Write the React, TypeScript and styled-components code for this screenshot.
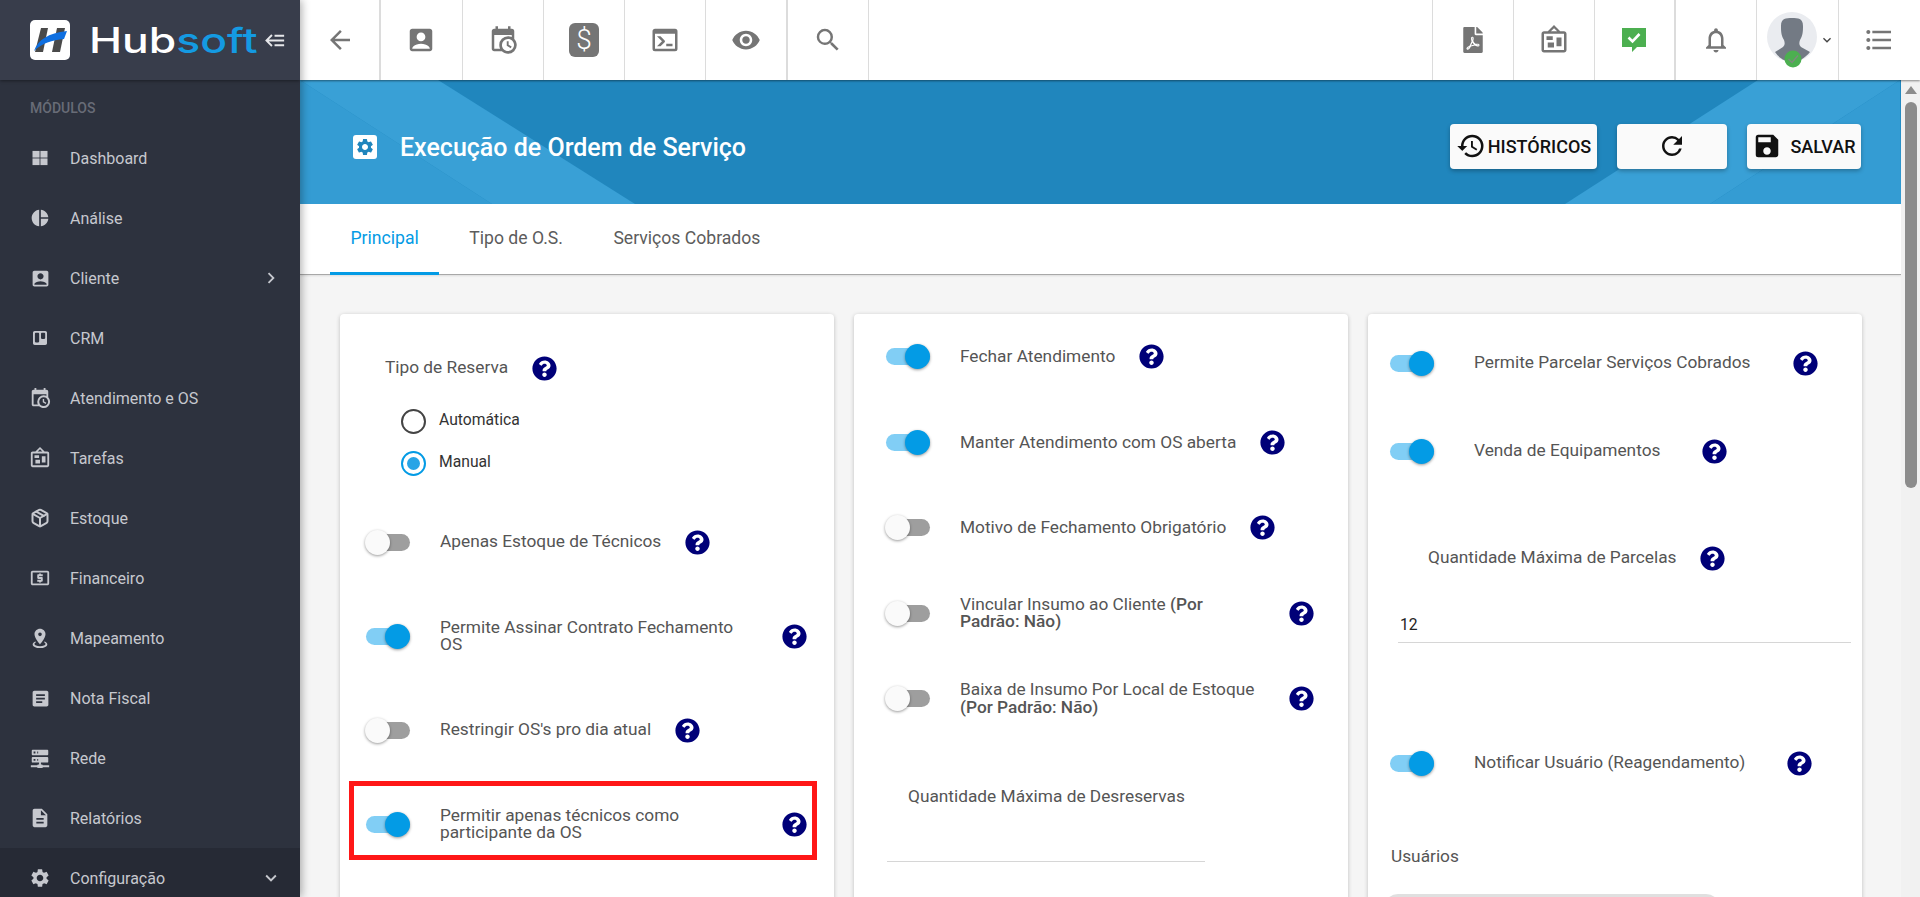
import * as React from 'react';
import styled, { createGlobalStyle } from 'styled-components';
import { FaFilePdf, FaQuestionCircle, FaTrello } from 'react-icons/fa';
import {
    MdAccountBox, MdArrowBack, MdArticle, MdChevronRight, MdDescription, MdFormatListBulleted,
    MdHistory, MdKeyboardArrowDown, MdLocalAtm, MdNotificationsNone, MdPieChart, MdRefresh,
    MdSave, MdSearch, MdSettings, MdVisibility,
} from 'react-icons/md';
import { Package } from 'lucide-react';

const GlobalStyle = createGlobalStyle`
    html, body { margin: 0; padding: 0; height: 100%; overflow: hidden; }
    body { font-family: Roboto, "Liberation Sans", sans-serif; background: #f5f5f5; }
    * { box-sizing: border-box; }
`;

const CALENDAR_CLOCK = 'M15,13H16.5V15.82L18.94,17.23L18.19,18.53L15,16.69V13M19,8H5V19H9.67C9.24,18.09 9,17.07 9,16A7,7 0 0,1 16,9C17.07,9 18.09,9.24 19,9.67V8M5,21C3.89,21 3,20.1 3,19V5C3,3.89 3.89,3 5,3H6V1H8V3H16V1H18V3H19A2,2 0 0,1 21,5V11.1C22.24,12.36 23,14.09 23,16A7,7 0 0,1 16,23C14.09,23 12.36,22.24 11.1,21H5M16,11.15A4.85,4.85 0 0,0 11.15,16C11.15,18.68 13.32,20.85 16,20.85A4.85,4.85 0 0,0 20.85,16C20.85,13.32 18.68,11.15 16,11.15Z';
const BULLETIN = 'M12.04 2.5L9.53 5H14.53L12.04 2.5M4 7V20H20V7H4M12 0L17 5V5L20 5C21.11 5 22 5.89 22 7V20C22 21.11 21.11 22 20 22H4C2.89 22 2 21.11 2 20V7C2 5.89 2.89 5 4 5H7V5L12 0M7 18V14H12V18H7M14 17V10H18V17H14M6 12V9H11V12H6Z';
const MAP_MARKER = 'M12,2C15.31,2 18,4.66 18,7.95C18,12.41 12,19 12,19C12,19 6,12.41 6,7.95C6,4.66 8.69,2 12,2M12,6A2,2 0 0,0 10,8A2,2 0 0,0 12,10A2,2 0 0,0 14,8A2,2 0 0,0 12,6M20,19C20,21.21 16.42,23 12,23C7.58,23 4,21.21 4,19C4,17.71 5.22,16.56 7.11,15.83L7.75,16.74C6.67,17.19 6,17.81 6,18.5C6,19.88 8.69,21 12,21C15.31,21 18,19.88 18,18.5C18,17.81 17.33,17.19 16.25,16.74L16.89,15.83C18.78,16.56 20,17.71 20,19Z';
const SERVER = 'M13,19H14A1,1 0 0,1 15,20H22V22H15A1,1 0 0,1 14,23H10A1,1 0 0,1 9,22H2V20H9A1,1 0 0,1 10,19H11V17H4A1,1 0 0,1 3,16V12A1,1 0 0,1 4,11H20A1,1 0 0,1 21,12V16A1,1 0 0,1 20,17H13V19M4,3H20A1,1 0 0,1 21,4V8A1,1 0 0,1 20,9H4A1,1 0 0,1 3,8V4A1,1 0 0,1 4,3M9,7H10V5H9V7M9,15H10V13H9V15M5,5V7H7V5H5M5,13V15H7V13H5Z';
const CONSOLE = 'M20,19V7H4V19H20M20,3A2,2 0 0,1 22,5V19A2,2 0 0,1 20,21H4A2,2 0 0,1 2,19V5C2,3.89 2.9,3 4,3H20M13,17V15H18V17H13M9.58,13L5.57,9H8.4L11.7,12.3C12.09,12.69 12.09,13.33 11.7,13.72L8.42,17H5.59L9.58,13Z';
const BACKBURGER = 'M5,13L9,17L7.6,18.42L1.18,12L7.6,5.58L9,7L5,11H21V13H5M21,6V8H11V6H21M21,16V18H11V16H21Z';

const Glyph = ({ d, size = 24 }: { d: string; size?: number }) => (
    <svg width={size} height={size} viewBox="0 0 24 24" fill="currentColor"><path d={d} /></svg>
);

const PanesIcon = () => (
    <svg width={20} height={20} viewBox="0 0 24 24" fill="currentColor">
        <rect x="3" y="3.5" width="8.5" height="8" /><rect x="12.5" y="3.5" width="8.5" height="8" />
        <rect x="3" y="12.5" width="8.5" height="8" /><rect x="12.5" y="12.5" width="8.5" height="8" />
    </svg>
);

const Page = styled.div`
    display: flex;
    width: 1920px;
    height: 897px;
    overflow: hidden;
`;

/* sidebar */
const Sidebar = styled.aside`
    width: 300px;
    flex: none;
    height: 100%;
    display: flex;
    flex-direction: column;
    background: #2d323e;
    box-shadow: 2px 0 8px rgba(0, 0, 0, .3);
    position: relative;
    z-index: 3;
    overflow: hidden;
`;
const Brand = styled.div`
    height: 80px;
    flex: none;
    display: flex;
    align-items: center;
    padding-left: 30px;
    background: #383d4b;
    box-shadow: 0 1px 3px rgba(0, 0, 0, .4);
`;
const LogoMark = styled.svg`
    flex: none;
    margin-right: 19px;
`;
const Wordmark = styled.div`
    font-family: Inter, sans-serif;
    font-weight: 500;
    font-size: 35px;
    line-height: 40px;
    color: #fff;
    width: 126px;
    transform: scaleX(1.27);
    transform-origin: left center;
    white-space: nowrap;
    span { color: #149ae2; }
`;
const Collapse = styled.div`
    color: #e6e7ea;
    margin-left: 49px;
    display: flex;
`;
const SectionLabel = styled.div`
    height: 48px;
    padding: 18px 0 0 30px;
    font-size: 14px;
    line-height: 20px;
    font-weight: 500;
    color: #686c77;
    flex: none;
`;
const NavItem = styled.div<{ $active?: boolean }>`
    height: 60px;
    flex: none;
    display: flex;
    align-items: center;
    padding-left: 29px;
    color: #c6c8ce;
    font-size: 16px;
    background: ${p => (p.$active ? '#262a35' : 'transparent')};
`;
const NavIcon = styled.span`
    width: 22px;
    height: 22px;
    margin-right: 19px;
    display: flex;
    align-items: center;
    justify-content: center;
`;
const NavArrow = styled.span`
    margin-left: auto;
    margin-right: 18px;
    display: flex;
`;

/* top bar */
const Main = styled.div`
    flex: 1;
    min-width: 0;
    display: flex;
    flex-direction: column;
`;
const TopBar = styled.header`
    height: 80px;
    flex: none;
    display: flex;
    justify-content: space-between;
    background: #fff;
    box-shadow: 0 1px 2px rgba(0, 0, 0, .45);
    position: relative;
    z-index: 2;
`;
const ToolGroup = styled.div`
    display: flex;
`;
const Tool = styled.div<{ $thick?: boolean; $first?: boolean; $bare?: boolean }>`
    width: 81.3px;
    display: flex;
    align-items: center;
    justify-content: center;
    color: #757575;
    border-right: ${p => (p.$bare ? 0 : p.$thick ? '2px' : '1px')} solid #dcdcdc;
    border-left: ${p => (p.$first ? '1px solid #dcdcdc' : '0')};
`;
const DollarBox = styled.div`
    width: 30px;
    height: 34px;
    border-radius: 6px;
    background: #757575;
    color: #fff;
    font-family: Roboto, sans-serif;
    font-weight: 300;
    font-size: 28px;
    line-height: 34px;
    text-align: center;
`;
const AvatarWrap = styled.div`
    display: flex;
    align-items: center;
    color: #444;
    gap: 2px;
    margin-left: 7px;
`;

/* body */
const Body = styled.div`
    flex: 1;
    min-height: 0;
    display: flex;
`;
const Scroller = styled.div`
    flex: 1;
    min-width: 0;
    display: flex;
    flex-direction: column;
    overflow: hidden;
`;
const FakeScrollbar = styled.div`
    width: 19px;
    flex: none;
    background: #f1f1f1;
    padding: 4px 4px 0;
`;
const ScrollUp = styled.div`
    width: 0;
    height: 0;
    margin: 2px 0 0 0;
    border-left: 6px solid transparent;
    border-right: 6px solid transparent;
    border-bottom: 8px solid #8c8c8c;
`;
const ScrollThumb = styled.div`
    width: 12px;
    height: 386px;
    margin-top: 8px;
    background: #8c8c8c;
    border-radius: 6px;
`;
const Hero = styled.div`
    height: 124px;
    flex: none;
    position: relative;
    display: flex;
    align-items: center;
    padding: 10px 40px 0 53px;
    background: #2086bd;
`;
const HeroArt = styled.svg`
    position: absolute;
    inset: 0;
    width: 100%;
    height: 100%;
`;
const TitleIcon = styled.div`
    position: relative;
    width: 24px;
    height: 24px;
    border-radius: 3px;
    background: #fff;
    color: #2086bd;
    display: flex;
    align-items: center;
    justify-content: center;
    margin-right: 23px;
`;
const Title = styled.h1`
    position: relative;
    margin: 0;
    color: #fff;
    font-size: 25px;
    font-weight: 500;
`;
const HeroActions = styled.div`
    position: relative;
    margin-left: auto;
    display: flex;
    gap: 20px;
    margin-top: -2px;
`;
const HeroButton = styled.button<{ $w: number }>`
    width: ${p => p.$w}px;
    height: 45px;
    border: 0;
    padding: 0 4px;
    border-radius: 4px;
    background: #fafafa;
    color: #111;
    font-family: Roboto, sans-serif;
    font-size: 18px;
    font-weight: 500;
    display: flex;
    align-items: center;
    justify-content: center;
    gap: 2px;
    box-shadow: 0 2px 4px rgba(0, 0, 0, .28);
`;
const Tabs = styled.nav`
    height: 71px;
    flex: none;
    display: flex;
    padding-left: 30px;
    background: #fff;
    border-bottom: 1px solid #a8a8a8;
    box-shadow: 0 1px 2px rgba(0, 0, 0, .1);
`;
const Tab = styled.div<{ $active?: boolean }>`
    padding: 0 20.5px;
    margin-right: 9.5px;
    display: flex;
    align-items: center;
    height: 71px;
    font-size: 17.6px;
    color: ${p => (p.$active ? '#039be5' : '#5c5c5c')};
    border-bottom: 3px solid ${p => (p.$active ? '#039be5' : 'transparent')};
`;
const Content = styled.div`
    flex: 1;
    min-height: 0;
    padding: 39px 39px 0 40px;
    display: grid;
    grid-template-columns: repeat(3, 494px);
    gap: 20px;
    overflow: hidden;
`;
const Card = styled.section<{ $pad?: number }>`
    height: 800px;
    background: #fff;
    border-radius: 4px;
    padding-top: ${p => p.$pad ?? 0}px;
    box-shadow: 0 1px 4px rgba(0, 0, 0, .22);
`;

/* form parts */
const Row = styled.div<{ $h: number; $left: number; $gap?: number; $top?: number }>`
    position: relative;
    height: ${p => p.$h}px;
    margin-top: ${p => p.$top ?? 0}px;
    padding-left: ${p => p.$left}px;
    display: flex;
    align-items: center;
    & > span:first-child { margin-right: ${p => p.$gap ?? 30}px; }
`;
const Track = styled.span<{ $on?: boolean }>`
    position: relative;
    width: 44px;
    height: 17px;
    flex: none;
    border-radius: 9px;
    background: ${p => (p.$on ? '#81cef5' : '#9e9e9e')};
    &::after {
        content: '';
        position: absolute;
        top: -4px;
        left: ${p => (p.$on ? '19px' : '-1px')};
        width: 25px;
        height: 25px;
        border-radius: 50%;
        background: ${p => (p.$on ? '#039be5' : '#fafafa')};
        box-shadow: 0 1px 3px rgba(0, 0, 0, .4);
    }
`;
const Label = styled.div<{ $w: number; $wrap?: number }>`
    width: ${p => p.$w}px;
    padding-right: ${p => (p.$wrap ? p.$w - p.$wrap : 0)}px;
    flex: none;
    font-size: 17.3px;
    line-height: 17.5px;
    color: #555;
    b { font-weight: 500; }
`;
const Help = styled.span`
    flex: none;
    width: 25px;
    height: 25px;
    display: flex;
    color: #000078;
    background: #fff;
    border-radius: 50%;
`;
const Plain = styled.div<{ $left: number; $top: number }>`
    margin: ${p => p.$top}px 0 0 ${p => p.$left}px;
    height: 20px;
    font-size: 17.3px;
    line-height: 20px;
    color: #555;
`;
const RadioRow = styled.div`
    height: 42.5px;
    padding-left: 61px;
    display: flex;
    align-items: center;
    gap: 13px;
    font-size: 15.7px;
    color: #333;
    span:last-child { margin-top: -4px; }
`;
const RadioDot = styled.span<{ $on?: boolean }>`
    width: 25px;
    height: 25px;
    border-radius: 50%;
    border: 2px solid ${p => (p.$on ? '#039be5' : '#444')};
    display: flex;
    align-items: center;
    justify-content: center;
    &::after {
        content: '';
        width: 13px;
        height: 13px;
        border-radius: 50%;
        background: ${p => (p.$on ? '#27a4e6' : 'transparent')};
    }
`;
const Field = styled.div<{ $left: number; $right?: number; $w?: number; $h: number; $top: number }>`
    margin: ${p => p.$top}px 0 0 ${p => p.$left}px;
    width: ${p => (p.$w ? `${p.$w}px` : 'auto')};
    margin-right: ${p => p.$right ?? 0}px;
    height: ${p => p.$h}px;
    padding-left: 2px;
    font-size: 15.7px;
    line-height: 36px;
    color: #222;
    border-bottom: 1px solid #d6d6d6;
`;
const Highlight = styled.div`
    position: absolute;
    left: 9px;
    right: 17px;
    top: 4px;
    height: 79px;
    border: 5px solid #ff1717;
    pointer-events: none;
`;
const Chips = styled.div`
    margin: 28px 0 0 16px;
    width: 336px;
    height: 40px;
    border-radius: 14px;
    background: #e0e0e0;
`;

const HelpIcon = () => (
    <Help><FaQuestionCircle size={25} /></Help>
);

const nav: { label: string; icon: React.ReactNode; arrow?: 'right' | 'down'; active?: boolean }[] = [
    { label: 'Dashboard', icon: <PanesIcon /> },
    { label: 'Análise', icon: <MdPieChart size={20} /> },
    { label: 'Cliente', icon: <MdAccountBox size={21} />, arrow: 'right' },
    { label: 'CRM', icon: <FaTrello size={16} /> },
    { label: 'Atendimento e OS', icon: <Glyph d={CALENDAR_CLOCK} size={22} /> },
    { label: 'Tarefas', icon: <Glyph d={BULLETIN} size={22} /> },
    { label: 'Estoque', icon: <Package size={20} strokeWidth={2.4} /> },
    { label: 'Financeiro', icon: <MdLocalAtm size={22} /> },
    { label: 'Mapeamento', icon: <Glyph d={MAP_MARKER} size={22} /> },
    { label: 'Nota Fiscal', icon: <MdArticle size={21} /> },
    { label: 'Rede', icon: <Glyph d={SERVER} size={22} /> },
    { label: 'Relatórios', icon: <MdDescription size={22} /> },
    { label: 'Configuração', icon: <MdSettings size={22} />, arrow: 'down', active: true },
];

const Toggle = ({ on, label, w, wrap, h, left, gap, top }: {
    on?: boolean; label: React.ReactNode; w: number; wrap?: number; h: number; left: number; gap?: number; top?: number;
}) => (
    <Row $h={h} $left={left} $gap={gap} $top={top}>
        <Track $on={on} />
        <Label $w={w} $wrap={wrap}>{label}</Label>
        <HelpIcon />
    </Row>
);

const App: React.FC = () => (
    <Page>
        <GlobalStyle />
        <Sidebar>
            <Brand>
                <LogoMark width={40} height={40} viewBox="0 0 40 40">
                    <rect width="40" height="40" rx="5" fill="#fff" />
                    <polygon points="11,8 18,8 13,32 5,32" fill="#4a4a4a" />
                    <polygon points="27,8 35,8 30,32 22,32" fill="#4a4a4a" />
                    <path d="M4 31 C8 20 18 13 37 11 L34 19 C22 20 12 23 4 31Z" fill="#0f6fe0" />
                </LogoMark>
                <Wordmark>Hub<span>soft</span></Wordmark>
                <Collapse><Glyph d={BACKBURGER} size={23} /></Collapse>
            </Brand>
            <SectionLabel>MÓDULOS</SectionLabel>
            {nav.map(item => (
                <NavItem key={item.label} $active={item.active}>
                    <NavIcon>{item.icon}</NavIcon>
                    {item.label}
                    {item.arrow && (
                        <NavArrow>
                            {item.arrow === 'right' ? <MdChevronRight size={22} /> : <MdKeyboardArrowDown size={22} />}
                        </NavArrow>
                    )}
                </NavItem>
            ))}
        </Sidebar>
        <Main>
            <TopBar>
                <ToolGroup>
                    <Tool $thick><MdArrowBack size={30} /></Tool>
                    <Tool><MdAccountBox size={30} /></Tool>
                    <Tool><Glyph d={CALENDAR_CLOCK} size={30} /></Tool>
                    <Tool><DollarBox>$</DollarBox></Tool>
                    <Tool><Glyph d={CONSOLE} size={30} /></Tool>
                    <Tool $thick><MdVisibility size={30} /></Tool>
                    <Tool><MdSearch size={30} /></Tool>
                </ToolGroup>
                <ToolGroup>
                    <Tool $first><FaFilePdf size={26} /></Tool>
                    <Tool><Glyph d={BULLETIN} size={30} /></Tool>
                    <Tool $thick>
                        <svg width={26} height={26} viewBox="0 0 26 26">
                            <path d="M1 1H25V20H16L11 25V20H1Z" fill="#4caf50" />
                            <path d="M7.5 10.5L11.5 14.5L18.5 7" fill="none" stroke="#fff" strokeWidth="2.6" />
                        </svg>
                    </Tool>
                    <Tool><MdNotificationsNone size={30} /></Tool>
                    <Tool>
                        <AvatarWrap>
                            <svg width={50} height={56} viewBox="0 0 50 56">
                                <circle cx="25" cy="25" r="25" fill="#eaecf0" />
                                <path d="M14 14C14 6 19 6 25 6C31 6 36 6 36 14C36 19 36 23 33 28C32 31 32 33 34 35L43 40C38 46 32 50 25 50C18 50 12 46 8 40L16 35C18 33 18 31 17 28C14 23 14 19 14 14Z" fill="#737a84" />
                                <circle cx="26" cy="47" r="8.5" fill="#4caf50" />
                                <path d="M21.5 47L25 50.5L31 43.5" fill="none" stroke="#7d8a7d" strokeWidth="1.5" />
                            </svg>
                            <MdKeyboardArrowDown size={16} />
                        </AvatarWrap>
                    </Tool>
                    <Tool $bare><MdFormatListBulleted size={32} /></Tool>
                </ToolGroup>
            </TopBar>
            <Body>
                <Scroller>
                    <Hero>
                        <HeroArt viewBox="0 0 1601 124" preserveAspectRatio="none">
                            <polygon points="0,0 192,124 0,124" fill="#349cd3" />
                            <polygon points="0,0 138,0 335,124 192,124" fill="#39a0d6" />
                            <polygon points="1458,0 1600,0 1410,124 1265,124" fill="#39a0d6" />
                            <polygon points="1600,0 1601,124 1410,124" fill="#349cd3" />
                        </HeroArt>
                        <TitleIcon><MdSettings size={20} /></TitleIcon>
                        <Title>Execução de Ordem de Serviço</Title>
                        <HeroActions>
                            <HeroButton $w={147}><MdHistory size={30} style={{ flex: 'none' }} />HISTÓRICOS</HeroButton>
                            <HeroButton $w={110}><MdRefresh size={30} /></HeroButton>
                            <HeroButton $w={114}><MdSave size={30} style={{ marginRight: 6 }} />SALVAR</HeroButton>
                        </HeroActions>
                    </Hero>
                    <Tabs>
                        <Tab $active>Principal</Tab>
                        <Tab>Tipo de O.S.</Tab>
                        <Tab>Serviços Cobrados</Tab>
                    </Tabs>
                    <Content>
                        <Card $pad={34}>
                            <Row $h={40} $left={45}>
                                <Label $w={147}>Tipo de Reserva</Label>
                                <HelpIcon />
                            </Row>
                            <RadioRow style={{ marginTop: 12 }}><RadioDot /><span>Automática</span></RadioRow>
                            <RadioRow><RadioDot $on /><span>Manual</span></RadioRow>
                            <Toggle top={10} h={94} left={26} w={244.5} label="Apenas Estoque de Técnicos" />
                            <Toggle on h={94} left={26} w={341.5} wrap={305} label="Permite Assinar Contrato Fechamento OS" />
                            <Toggle h={94} left={26} w={234.5} label="Restringir OS's pro dia atual" />
                            <Row $h={94} $left={26}>
                                <Track $on />
                                <Label $w={341.5} $wrap={305}>Permitir apenas técnicos como participante da OS</Label>
                                <HelpIcon />
                                <Highlight />
                            </Row>
                        </Card>
                        <Card>
                            <Toggle on h={85.5} left={32} w={178.5} label="Fechar Atendimento" />
                            <Toggle on h={85.5} left={32} w={299.5} label="Manter Atendimento com OS aberta" />
                            <Toggle h={85.5} left={32} w={289.5} label="Motivo de Fechamento Obrigatório" />
                            <Toggle h={85.5} left={32} w={328.5} wrap={305} label={<>Vincular Insumo ao Cliente <b>(Por Padrão: Não)</b></>} />
                            <Toggle h={85.5} left={32} w={328.5} wrap={305} label={<>Baixa de Insumo Por Local de Estoque <b>(Por Padrão: Não)</b></>} />
                            <Plain $left={54} $top={44}>Quantidade Máxima de Desreservas</Plain>
                            <Field $left={33} $w={318} $h={36} $top={20} />
                        </Card>
                        <Card $pad={5}>
                            <Toggle on h={88} left={22} gap={40} w={318.5} label="Permite Parcelar Serviços Cobrados" />
                            <Toggle on h={88} left={22} gap={40} w={227.5} label="Venda de Equipamentos" />
                            <Row $h={40} $left={60} $top={43}>
                                <Label $w={272}>Quantidade Máxima de Parcelas</Label>
                                <HelpIcon />
                            </Row>
                            <Field $left={30} $right={11} $h={36} $top={29}>12</Field>
                            <Toggle on top={76} h={88} left={22} gap={40} w={312.5} label="Notificar Usuário (Reagendamento)" />
                            <Plain $left={23} $top={39}>Usuários</Plain>
                            <Chips />
                        </Card>
                    </Content>
                </Scroller>
                <FakeScrollbar>
                    <ScrollUp />
                    <ScrollThumb />
                </FakeScrollbar>
            </Body>
        </Main>
    </Page>
);

export default App;
